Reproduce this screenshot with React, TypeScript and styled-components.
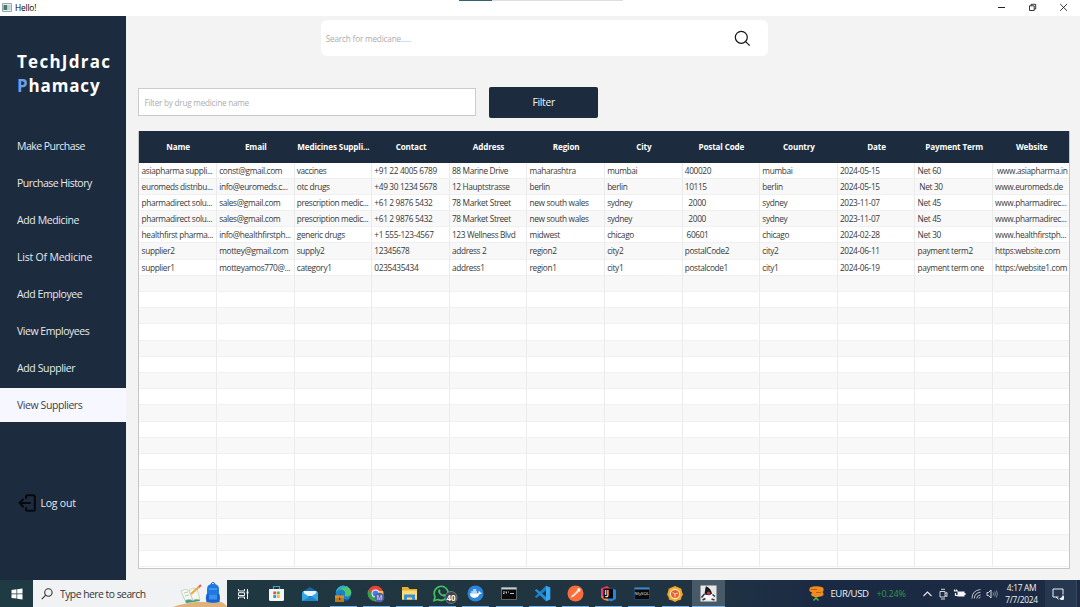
import React from "react";
import styled, { createGlobalStyle } from "styled-components";

const GlobalStyle = createGlobalStyle`
  * { box-sizing: border-box; }
  body {
    margin: 0;
    overflow: hidden;
    background: #f3f3f3;
    font-family: "Open Sans", "Noto Sans", sans-serif;
  }
  svg { display: block; flex: none; }
`;

const navy = "#1c2c3e";

const Screen = styled.div`
  width: 1080px;
  height: 607px;
  display: flex;
  flex-direction: column;
`;

const TitleBar = styled.header`
  height: 16px;
  flex: none;
  background: #fff;
  display: flex;
  align-items: flex-start;
  font-size: 8.4px;
  line-height: 16px;
  color: #000;
`;
const AppMark = styled.div`
  width: 10px;
  height: 9px;
  margin: 3px 3px 0 2px;
`;
const WindowName = styled.div`
  width: 444px;
  letter-spacing: -0.2px;
`;
const LoadBar = styled.div`
  width: 164px;
  height: 1px;
  background: #dedede;
`;
const LoadDone = styled.div`
  width: 33px;
  height: 1px;
  background: #33636f;
`;
const WindowButtons = styled.div`
  margin-left: auto;
  padding: 3px 12px 0 0;
  display: flex;
  gap: 22px;
`;

const Main = styled.div`
  height: 564px;
  flex: none;
  display: flex;
`;

const Sidebar = styled.nav`
  width: 126.4px;
  flex: none;
  background: ${navy};
  display: flex;
  flex-direction: column;
  color: #e6e9ed;
`;
const Brand = styled.h1`
  margin: 34px 0 30.5px 17px;
  font-size: 17px;
  line-height: 24px;
  font-weight: 700;
  color: #fff;
  white-space: nowrap;
`;
const BrandLine = styled.div<{ $track: number }>`
  letter-spacing: ${(p) => p.$track}px;
`;
const BrandAccent = styled.span`
  color: #6c9eea;
`;
const NavItem = styled.div<{ $active?: boolean; $track: number }>`
  height: 34px;
  margin-bottom: 3.07px;
  padding-left: 17px;
  font-size: 10.5px;
  line-height: 34px;
  letter-spacing: ${(p) => p.$track}px;
  white-space: nowrap;
  background: ${(p) => (p.$active ? "#f7f7ff" : "transparent")};
  color: ${(p) => (p.$active ? "#3c424b" : "#e6e9ed")};
`;
const LogOut = styled.div`
  margin-top: 68px;
  padding-left: 18px;
  display: flex;
  align-items: center;
  gap: 4.5px;
  height: 20px;
  font-size: 10.5px;
  letter-spacing: -0.22px;
`;

const Content = styled.main`
  flex: 1;
  background: #f3f3f3;
  padding: 4px 10px 0 12px;
  display: flex;
  flex-direction: column;
`;
const SearchBox = styled.div`
  width: 447px;
  height: 36px;
  margin-left: 182.3px;
  padding: 0 17px 0 5px;
  border-radius: 6px;
  background: #fff;
  display: flex;
  align-items: center;
  justify-content: space-between;
`;
const Placeholder = styled.span<{ $track?: number }>`
  font-size: 8.2px;
  color: #adadad;
  letter-spacing: ${(p) => p.$track ?? -0.17}px;
`;
const FilterRow = styled.div`
  margin-top: 31px;
  display: flex;
  align-items: flex-start;
  gap: 13px;
`;
const FilterInput = styled.div`
  width: 338px;
  height: 28px;
  margin-top: 1px;
  padding: 0 5px;
  border: 1px solid #cbcbcb;
  background: #fff;
  display: flex;
  align-items: center;
`;
const FilterButton = styled.div`
  width: 108.5px;
  height: 31px;
  border-radius: 2px;
  background: ${navy};
  color: #f2f4f6;
  font-size: 10.3px;
  line-height: 31px;
  text-align: center;
  letter-spacing: -0.3px;
`;

const Table = styled.div`
  width: 931.5px;
  height: 438.5px;
  margin-top: 12.5px;
  border: 1px solid #c6c6c6;
  border-top: 0;
  background: #fff;
  overflow: hidden;
`;
const columns = "repeat(12, 77.6px)";
const HeadRow = styled.div`
  display: grid;
  grid-template-columns: ${columns};
  height: 32px;
  margin: 0 -1px;
  padding-left: 1px;
  background: ${navy};
`;
const HeadCell = styled.div`
  color: #fff;
  font-size: 8.1px;
  font-weight: 700;
  line-height: 32px;
  text-align: center;
  letter-spacing: -0.13px;
  white-space: nowrap;
`;
const Row = styled.div<{ $odd: boolean }>`
  display: grid;
  grid-template-columns: ${columns};
  height: 16.2px;
  background: ${(p) => (p.$odd ? "#f8f8f8" : "#fff")};
  border-bottom: 1px solid #f0f0f0;
`;
const Cell = styled.div`
  padding-left: 2.2px;
  border-right: 1px solid #ebebeb;
  color: #383838;
  font-size: 8.3px;
  line-height: 16.6px;
  letter-spacing: -0.35px;
  white-space: pre;
`;

const TaskBar = styled.footer`
  height: 27px;
  flex: none;
  display: flex;
  background: linear-gradient(90deg, #1e3a43 0%, #20353f 45%, #1f3343 66%, #1b2a44 76%, #1c2a42 100%);
  color: #eef1f4;
`;
const StartButton = styled.div`
  width: 33px;
  display: flex;
  align-items: center;
  justify-content: center;
`;
const TaskSearch = styled.div`
  width: 194px;
  background: #f1f2f3;
  display: flex;
  align-items: center;
  padding-left: 8px;
  color: #333;
  font-size: 10.3px;
  letter-spacing: -0.48px;
  gap: 7px;
`;
const SearchArt = styled.div`
  margin-left: auto;
`;
const Task = styled.div<{ $open?: boolean; $active?: boolean }>`
  width: 33.2px;
  height: 27px;
  display: flex;
  align-items: center;
  justify-content: center;
  background:
    ${(p) => (p.$open ? `linear-gradient(#79b4e6, #79b4e6) center bottom / ${p.$active ? 33 : 27}px 1.5px no-repeat` : "none")}
    ${(p) => (p.$active ? ", #485a68" : "")};
`;
const Tray = styled.div`
  margin-left: auto;
  display: flex;
  align-items: center;
`;
const Pair = styled.div`
  margin-left: 5px;
  width: 46px;
  font-size: 9.6px;
  letter-spacing: -0.4px;
`;
const Change = styled.div`
  width: 46px;
  font-size: 9px;
  letter-spacing: -0.2px;
  color: #2f9b45;
`;
const TrayIcons = styled.div`
  display: flex;
  align-items: center;
  gap: 4.4px;
`;
const Clock = styled.div`
  width: 47px;
  margin-top: 1px;
  font-size: 8.4px;
  line-height: 12px;
  letter-spacing: -0.3px;
  text-align: center;
`;
const Notice = styled.div`
  width: 32px;
  height: 27px;
  margin: 0 3px 0 0;
  background: #263750;
  display: flex;
  align-items: center;
  padding-left: 7px;
  border-right: 1px solid #344861;
`;

const heads = ["Name", "Email", "Medicines Suppli...", "Contact", "Address", "Region", "City", "Postal Code", "Country", "Date", "Payment Term", "Website"];
const suppliers = [
  ["asiapharma suppli...", "const@gmail.com", "vaccines", "+91 22 4005 6789", "88 Marine Drive", "maharashtra", "mumbai", "400020", "mumbai", "2024-05-15", "Net 60", " www.asiapharma.in"],
  ["euromeds distribu...", "info@euromeds.c...", "otc drugs", "+49 30 1234 5678", "12 Hauptstrasse", "berlin", "berlin", "10115", "berlin", "2024-05-15", " Net 30", "www.euromeds.de"],
  ["pharmadirect solu...", "sales@gmail.com", "prescription medic...", "+61 2 9876 5432", "78 Market Street", "new south wales", "sydney", "  2000", "sydney", "2023-11-07", "Net 45", "www.pharmadirec..."],
  ["pharmadirect solu...", "sales@gmail.com", "prescription medic...", "+61 2 9876 5432", "78 Market Street", "new south wales", "sydney", "  2000", "sydney", "2023-11-07", "Net 45", "www.pharmadirec..."],
  ["healthfirst pharma...", "info@healthfirstph...", "generic drugs", "+1 555-123-4567", "123 Wellness Blvd", "midwest", "chicago", " 60601", "chicago", "2024-02-28", "Net 30", "www.healthfirstph..."],
  ["supplier2", "mottey@gmail.com", "supply2", "12345678", "address 2", "region2", "city2", "postalCode2", "city2", "2024-06-11", "payment term2", "https:website.com"],
  ["supplier1", "motteyamos770@...", "category1", "0235435434", "address1", "region1", "city1", "postalcode1", "city1", "2024-06-19", "payment term one", "https:/website1.com"],
];
const blank = Array<string>(12).fill("");
const rows = Array.from({ length: 25 }, (_, i) => suppliers[i] ?? blank);

const nav: { label: string; track: number }[] = [
  { label: "Make Purchase", track: -0.52 },
  { label: "Purchase History", track: -0.52 },
  { label: "Add Medicine", track: -0.38 },
  { label: "List Of Medicine", track: -0.2 },
  { label: "Add Employee", track: -0.42 },
  { label: "View Employees", track: -0.46 },
  { label: "Add Supplier", track: -0.38 },
  { label: "View Suppliers", track: -0.42 },
];

const StoreIcon = () => (
  <svg width="17" height="17" viewBox="0 0 17 17">
    <path d="M5.5 4V1.5h6V4" fill="none" stroke="#3e9ed0" strokeWidth="1.2" />
    <path d="M1 4h15v10.5a1.5 1.5 0 0 1-1.500 1.500h-12A1.500 1.500 0 0 1 1 14.500z" fill="#f3f5f6" />
    <path d="M5.300 6.500h2.800v2.800H5.300z" fill="#e25537" />
    <path d="M8.900 6.500h2.800v2.800H8.900z" fill="#6fae35" />
    <path d="M5.300 10.100h2.800v2.800H5.300z" fill="#2c94d8" />
    <path d="M8.900 10.100h2.800v2.800H8.900z" fill="#f3b52c" />
  </svg>
);
const MailIcon = () => (
  <svg width="18" height="16" viewBox="0 0 18 16">
    <path d="M1 6 9 1l8 5v9H1z" fill="#1467b0" />
    <path d="M2.500 5h13v5h-13z" fill="#e8f3fa" />
    <path d="M1 6l8 5.200L17 6v9H1z" fill="#35a6e6" />
    <path d="M1 15l9-5 7 5z" fill="#1c84d0" />
  </svg>
);
const EdgeIcon = () => (
  <svg width="18" height="18" viewBox="0 0 18 18">
    <circle cx="9.500" cy="8.500" r="7.800" fill="#1a80c9" />
    <path d="M2 7C3 2.500 6.500.7 9.500.7c4.700 0 7.800 3.500 7.800 6.800 0 2.800-2 4-4.300 4-2 0-2.600-.8-2-2C12 6.800 9.500 4.600 7 4.600 4.500 4.600 2.800 5.800 2 7z" fill="#4ec56f" />
    <path d="M2 7C3 2.500 6.500.7 9.500.7c2 0 3.700.7 5 1.800C10 1.500 6 3 2 7z" fill="#2ba9cf" />
    <path d="M7 8c-1 3 1 6.500 5.500 6.500 2 0 3.200-.6 4-1.500-1.500 2.400-4 3.500-7 3.300C5.500 15 4.500 10.500 7 8z" fill="#12519a" />
    <path d="M1 10.500h9v6.500H1z" fill="#b77820" />
    <path d="M1 10.500h9v2.500H1z" fill="#d58f28" />
    <path d="M5 12.500h1.200V15H5z" fill="#4f310c" />
  </svg>
);
const ChromeIcon = () => (
  <svg width="18" height="18" viewBox="0 0 18 18">
    <circle cx="8.500" cy="8.500" r="7.800" fill="#e8443a" />
    <path d="M1.700 4.700A7.800 7.800 0 0 0 8 16.300l3.200-5.800-5.800 0z" fill="#32a350" />
    <path d="M16 6H8.500l3.300 4.300L8 16.300A7.800 7.800 0 0 0 16 6z" fill="#f7c52c" />
    <circle cx="8.500" cy="8.500" r="3.900" fill="#fff" />
    <circle cx="8.500" cy="8.500" r="3" fill="#3f7fe8" />
    <circle cx="12.500" cy="12.500" r="4.800" fill="#5560a8" />
    <text x="12.500" y="15" fontSize="6.500" fill="#e8e9ff" textAnchor="middle">M</text>
  </svg>
);
const FolderIcon = () => (
  <svg width="17" height="15" viewBox="0 0 17 15">
    <path d="M1 1h6l1.500 2H16v11H1z" fill="#e5ae33" />
    <path d="M1 4.500h15V13H1z" fill="#fbdc79" />
    <path d="M3 14V8.500h11V14h-3v-2.500H6V14z" fill="#3c8fd2" />
  </svg>
);
const WhatsAppIcon = () => (
  <svg width="31" height="20" viewBox="-5 0 31 20">
    <path d="M3 16.500l1.100-3.700a7 7 0 1 1 2.800 2.700z" transform="translate(-1 0)" fill="none" stroke="#42c463" strokeWidth="1.600" />
    <path d="M6.600 5.800c.6-.8 1.300-.5 1.600.3.500 1.200.2 1.400-.2 1.900.8 1.400 1.700 2.200 3 2.700.7-.9 1-1 1.800-.6 1.200.6 1.200 1.200.4 2-1.100 1-3 .5-4.800-1C6.500 9.500 5.500 7.400 6.600 5.800z" fill="#42c463" />
    <circle cx="19" cy="13.500" r="6" fill="#3b464c" stroke="#8c969b" strokeWidth=".7" />
    <text x="19" y="16.500" fontSize="8" fontWeight="700" fill="#fff" textAnchor="middle">40</text>
  </svg>
);
const DockerIcon = () => (
  <svg width="17" height="17" viewBox="0 0 17 17">
    <circle cx="8.500" cy="8.500" r="8" fill="#2b87dc" />
    <path d="M3 8.300h8.500c.2-1-.1-1.800.4-2.500.8.500 1 1.200 1 1.800.6-.1 1.300 0 1.700.3-.4.900-1.100 1.200-2 1.200-1 2.700-2.800 3.800-5.200 3.800C4.500 12.900 3 11.500 3 8.300z" fill="#fff" />
    <path d="M4.200 6.300h5.800v1.500H4.200zM6 4.300h3.200v1.500H6z" fill="#dcecfb" />
  </svg>
);
const TerminalIcon = ({ sql }: { sql?: boolean }) => (
  <svg width="16" height="13" viewBox="0 0 16 13">
    <path d="M.5.500h15v12H.5z" fill="#080a0c" stroke={sql ? "#244e73" : "#737b80"} strokeWidth=".8" />
    <path d="M.5.500h15v2H.5z" fill={sql ? "#3f87c7" : "#c9ced0"} />
    {sql ? (
      <text x="8" y="8" fontSize="4.300" fill="#dce6ed" textAnchor="middle">MySQL</text>
    ) : (
      <path d="M2 5h2.500M5.500 4.500v2M7 5h1M9 6.500h4M2 6.500h1.500" stroke="#d4d7d9" strokeWidth=".9" />
    )}
  </svg>
);
const CodeIcon = () => (
  <svg width="17" height="17" viewBox="0 0 17 17">
    <path d="M12 .7 16.300 2.600v11.800L12 16.300z" fill="#39a7ef" />
    <path d="M12 .7v4.500L2.500 13 .8 11.700z" fill="#1781c9" />
    <path d="M12 16.300v-4.500L2.500 4 .8 5.300z" fill="#218fd8" />
  </svg>
);
const PostmanIcon = () => (
  <svg width="17" height="17" viewBox="0 0 17 17">
    <circle cx="8.500" cy="8.500" r="8" fill="#f96d3d" />
    <path d="M5 10.500 10 5.500l1.500 1.500-5 4.500-3 1z" fill="#fff" />
    <circle cx="11.800" cy="5" r="1.700" fill="#fff" />
    <path d="M6 10l4.500-3.800" stroke="#f96d3d" strokeWidth=".6" />
  </svg>
);
const IdeaIcon = () => (
  <svg width="17" height="17" viewBox="0 0 17 17">
    <path d="M1 3.500 7 1l4 3-3 12-7-4z" fill="#ec3c6b" />
    <path d="M11 2.500 16 5v9l-5 2.500-5-3z" fill="#2485df" />
    <path d="M1 12l4-2 4 6-5-1z" fill="#f59144" />
    <path d="M3.500 3.500h9.500v10H3.500z" fill="#08090b" />
    <text x="4.500" y="9.500" fontSize="6.500" fontWeight="700" fill="#fff">IJ</text>
    <path d="M5 11.700h3" stroke="#fff" strokeWidth=".8" />
  </svg>
);
const HexIcon = () => (
  <svg width="18" height="18" viewBox="0 0 18 18">
    <path d="M9 1l3 1.200 3.300 1.500L16 7l1 2.500-1.500 2.500-.7 2.700-3 .8L9 17l-2.800-1.500-3-.8-.7-2.700L1 9.500 2 7l.7-3.300L6 2.200z" fill="#f5a623" />
    <circle cx="9" cy="9" r="4.600" fill="#e7602e" stroke="#fff0d4" strokeWidth="1.100" />
    <path d="M6.500 7.500 9 9l3-1M9 9v3" fill="none" stroke="#fbd9bc" strokeWidth="1" />
  </svg>
);
const DukeIcon = () => (
  <svg width="17" height="17" viewBox="0 0 17 17">
    <path d="M.5.500h16v16H.5z" fill="#e8e8e6" />
    <path d="M6 1.200C9.500 2.500 11.500 5.500 12 9l-3 1.500-4.500-1C5 6.500 5 3.500 6 1.200z" fill="#17191c" />
    <path d="M4.500 9.500 9 10.500 12 9l1 5.500H4z" fill="#fff" />
    <path d="M1.500 12.500l3-3.500M12.500 9.500l2.500 2M2.500 15l3-1.500M11.500 14l3 1" stroke="#34373b" strokeWidth="1.500" fill="none" />
    <circle cx="8.600" cy="8.300" r="1.700" fill="#cf3447" />
  </svg>
);
const TaskViewIcon = () => (
  <svg width="13" height="12" viewBox="0 0 13 12" fill="none" stroke="#eef2f4" strokeWidth="1">
    <path d="M1.500 1v2h6V1M1.500 11V9h6v2M1.500 4.700h6v2.800h-6zM10.500 1v10" />
    <path d="M9.500 3.500h2v2h-2z" fill="#eef2f4" stroke="none" />
  </svg>
);

const tasks: { icon: React.ReactNode; open?: boolean; active?: boolean }[] = [
  { icon: <TaskViewIcon /> },
  { icon: <StoreIcon /> },
  { icon: <MailIcon /> },
  { icon: <EdgeIcon />, open: true },
  { icon: <ChromeIcon />, open: true },
  { icon: <FolderIcon />, open: true },
  { icon: <WhatsAppIcon />, open: true },
  { icon: <DockerIcon />, open: true },
  { icon: <TerminalIcon />, open: true },
  { icon: <CodeIcon />, open: true },
  { icon: <PostmanIcon />, open: true },
  { icon: <IdeaIcon />, open: true },
  { icon: <TerminalIcon sql />, open: true },
  { icon: <HexIcon />, open: true },
  { icon: <DukeIcon />, open: true, active: true },
];

export default function App() {
  return (
    <Screen>
      <GlobalStyle />
      <TitleBar>
        <AppMark>
          <svg width="10" height="9" viewBox="0 0 10 9">
            <path d="M.5.500h9v8h-9z" fill="#e9eeee" stroke="#9aa5a5" />
            <path d="M1.500 2h3.800v5H1.500z" fill="#467a74" />
            <path d="M6.200 2h2.300v5H6.200z" fill="#bfcccb" />
          </svg>
        </AppMark>
        <WindowName>Hello!</WindowName>
        <LoadBar><LoadDone /></LoadBar>
        <WindowButtons>
          <svg width="9" height="9" viewBox="0 0 9 9"><path d="M1 4.500h7" stroke="#222" /></svg>
          <svg width="9" height="9" viewBox="0 0 9 9" fill="none" stroke="#222" strokeWidth=".9">
            <path d="M1.500 2.800h4.700v4.700H1.500zM3 2.800V1.300h4.700V6H6.200" />
          </svg>
          <svg width="9" height="9" viewBox="0 0 9 9"><path d="M1.200 1 8 7.800M8 1 1.200 7.800" stroke="#222" strokeWidth=".9" /></svg>
        </WindowButtons>
      </TitleBar>

      <Main>
        <Sidebar>
          <Brand>
            <BrandLine $track={1.25}>TechJdrac</BrandLine>
            <BrandLine $track={0.85}><BrandAccent>P</BrandAccent>hamacy</BrandLine>
          </Brand>
          {nav.map((item, i) => (
            <NavItem key={item.label} $track={item.track} $active={i === nav.length - 1}>{item.label}</NavItem>
          ))}
          <LogOut>
            <svg width="18" height="18" viewBox="0 0 18 18" fill="none" stroke="#05080c" strokeWidth="2" strokeLinecap="round" strokeLinejoin="round">
              <path d="M8 4V2.500q0-1.300 1.300-1.300h6q1.500 0 1.500 1.500v12.600q0 1.500-1.500 1.500h-6Q8 16.800 8 15.500V14" />
              <path d="M12 9H1.800M5 5.500 1.500 9 5 12.500" />
            </svg>
            Log out
          </LogOut>
        </Sidebar>

        <Content>
          <SearchBox>
            <Placeholder>Search for medicane.....</Placeholder>
            <svg width="17" height="17" viewBox="0 0 17 17" fill="none" stroke="#151515" strokeWidth="1.200">
              <circle cx="7.300" cy="7.300" r="6" />
              <path d="M11.600 11.600 15.700 15.700" />
            </svg>
          </SearchBox>
          <FilterRow>
            <FilterInput><Placeholder $track={-0.24}>Filter by drug medicine name</Placeholder></FilterInput>
            <FilterButton>Filter</FilterButton>
          </FilterRow>
          <Table>
            <HeadRow>
              {heads.map((h) => <HeadCell key={h}>{h}</HeadCell>)}
            </HeadRow>
            {rows.map((cells, r) => (
              <Row key={r} $odd={r % 2 === 1}>
                {cells.map((c, i) => <Cell key={i}>{c}</Cell>)}
              </Row>
            ))}
          </Table>
        </Content>
      </Main>

      <TaskBar>
        <StartButton>
          <svg width="12" height="12" viewBox="0 0 12 12" fill="#fff">
            <path d="M.5 2 5.500 1.300v4.300h-5zM6.200 1.200 11.500.5v5.100H6.200zM.5 6.300h5v4.300L.5 10zM6.200 6.300h5.300v5.100l-5.300-.7z" />
          </svg>
        </StartButton>
        <TaskSearch>
          <svg width="12" height="12" viewBox="0 0 12 12" fill="none" stroke="#333" strokeWidth="1.100">
            <circle cx="7.400" cy="4.500" r="3.700" />
            <path d="M4.700 7.200.8 11.200" />
          </svg>
          Type here to search
          <SearchArt>
            <svg width="54" height="27" viewBox="0 0 54 27">
              <path d="M0 27Q8 24 22 22h26q4 1 6 5z" fill="#dfb27b" />
              <path d="M9 13 22 11l5 10-14 2z" fill="#3c9b7d" />
              <path d="M8 11q4-3 8-.5 3-3 8-2l3 11q-5-1-7 1-4-2-8 0z" fill="#f8f7ee" stroke="#a9c4b3" strokeWidth=".6" />
              <path d="M16 10.500l4 10M11 13l4-1M12 16l4-1" stroke="#a3b5ac" strokeWidth=".7" />
              <path d="M18 14 27 6" stroke="#f0a33e" strokeWidth="2" />
              <path d="M26 7l2-2" stroke="#e0607a" strokeWidth="2.200" />
              <path d="M38 5q0-2.500 2-2.500T42 5" fill="none" stroke="#1955ad" />
              <path d="M34 9q0-5 6-5t6 5v13q-6 2-12 0z" fill="#1f78e2" />
              <path d="M33.500 14q-1.500 4 0 8h13q1-4 0-8z" fill="#1862ce" />
              <path d="M36 14.500h8v5h-8z" fill="#3a92ef" />
              <path d="M36 9h8" stroke="#69b2f5" />
            </svg>
          </SearchArt>
        </TaskSearch>
        {tasks.map((t, i) => (
          <Task key={i} $open={t.open} $active={t.active}>{t.icon}</Task>
        ))}
        <Tray>
          <svg width="17" height="17" viewBox="0 0 17 17">
            <path d="M2 2.500Q8 0 15 2.500q1.500 3-.5 4.500 2 2 0 4L8 12.500 4 11q-2-2 .5-3.500Q0 7 2 2.500z" fill="#ee8c20" />
            <path d="M3 4.500h6M8 7.500h5" stroke="#b95d13" />
            <path d="M5.500 15.500 8 13l2.500 2.500" fill="none" stroke="#4bb04f" strokeWidth="1.600" />
          </svg>
          <Pair>EUR/USD</Pair>
          <Change>+0.24%</Change>
          <TrayIcons>
            <svg width="11" height="12" viewBox="0 0 11 12"><path d="M1.500 8 5.500 4l4 4" fill="none" stroke="#e8ebef" strokeWidth="1.100" /></svg>
            <svg width="11" height="12" viewBox="0 0 11 12" fill="none" stroke="#e8ebef" strokeWidth=".9">
              <path d="M2 3.500h5v5.500H2zM7 5.500l2-1v4l-2-1M3 1.300h4M3 11h4" />
            </svg>
            <svg width="13" height="12" viewBox="0 0 13 12">
              <path d="M4.500 3.500h7v5h-7zM11.500 5h1v2h-1z" fill="#f4f6f8" />
              <path d="M1 3h4M1.500 1.500v2M3.500 1.500v2M2.500 5v2.500H5" fill="none" stroke="#f4f6f8" strokeWidth="1.200" />
            </svg>
            <svg width="11" height="12" viewBox="0 0 11 12" fill="none" stroke="#c9d0d8" strokeWidth=".9">
              <path d="M1 10.500Q1 2.500 9.500 1.500M3.300 10.500Q3.500 5 9.500 4.200M5.700 10.500Q6 7.500 9.500 6.800M8 10.500q0-1 1.500-1.500" />
            </svg>
            <svg width="12" height="12" viewBox="0 0 12 12" fill="none" stroke="#e8ebef" strokeWidth=".9">
              <path d="M1 4.500h1.500L5 2v8L2.500 7.500H1z" />
              <path d="M7 4.500q1 1.500 0 3M8.700 3.500q1.500 2.500 0 5M10.400 2.500q2 3.500 0 7" stroke="#8993a1" />
            </svg>
          </TrayIcons>
          <Clock>4:17 AM<br />7/7/2024</Clock>
          <Notice>
            <svg width="12" height="12" viewBox="0 0 12 12" fill="none" stroke="#edf0f4" strokeWidth="1">
              <path d="M1 1h10v5.500M6.500 9 1 9V1M4 9l2.500 2.300" />
              <path d="M10.500 7.200A2.500 2.500 0 1 1 7.500 10Q10 10 10.500 7.200z" fill="#edf0f4" stroke="none" />
            </svg>
          </Notice>
        </Tray>
      </TaskBar>
    </Screen>
  );
}
